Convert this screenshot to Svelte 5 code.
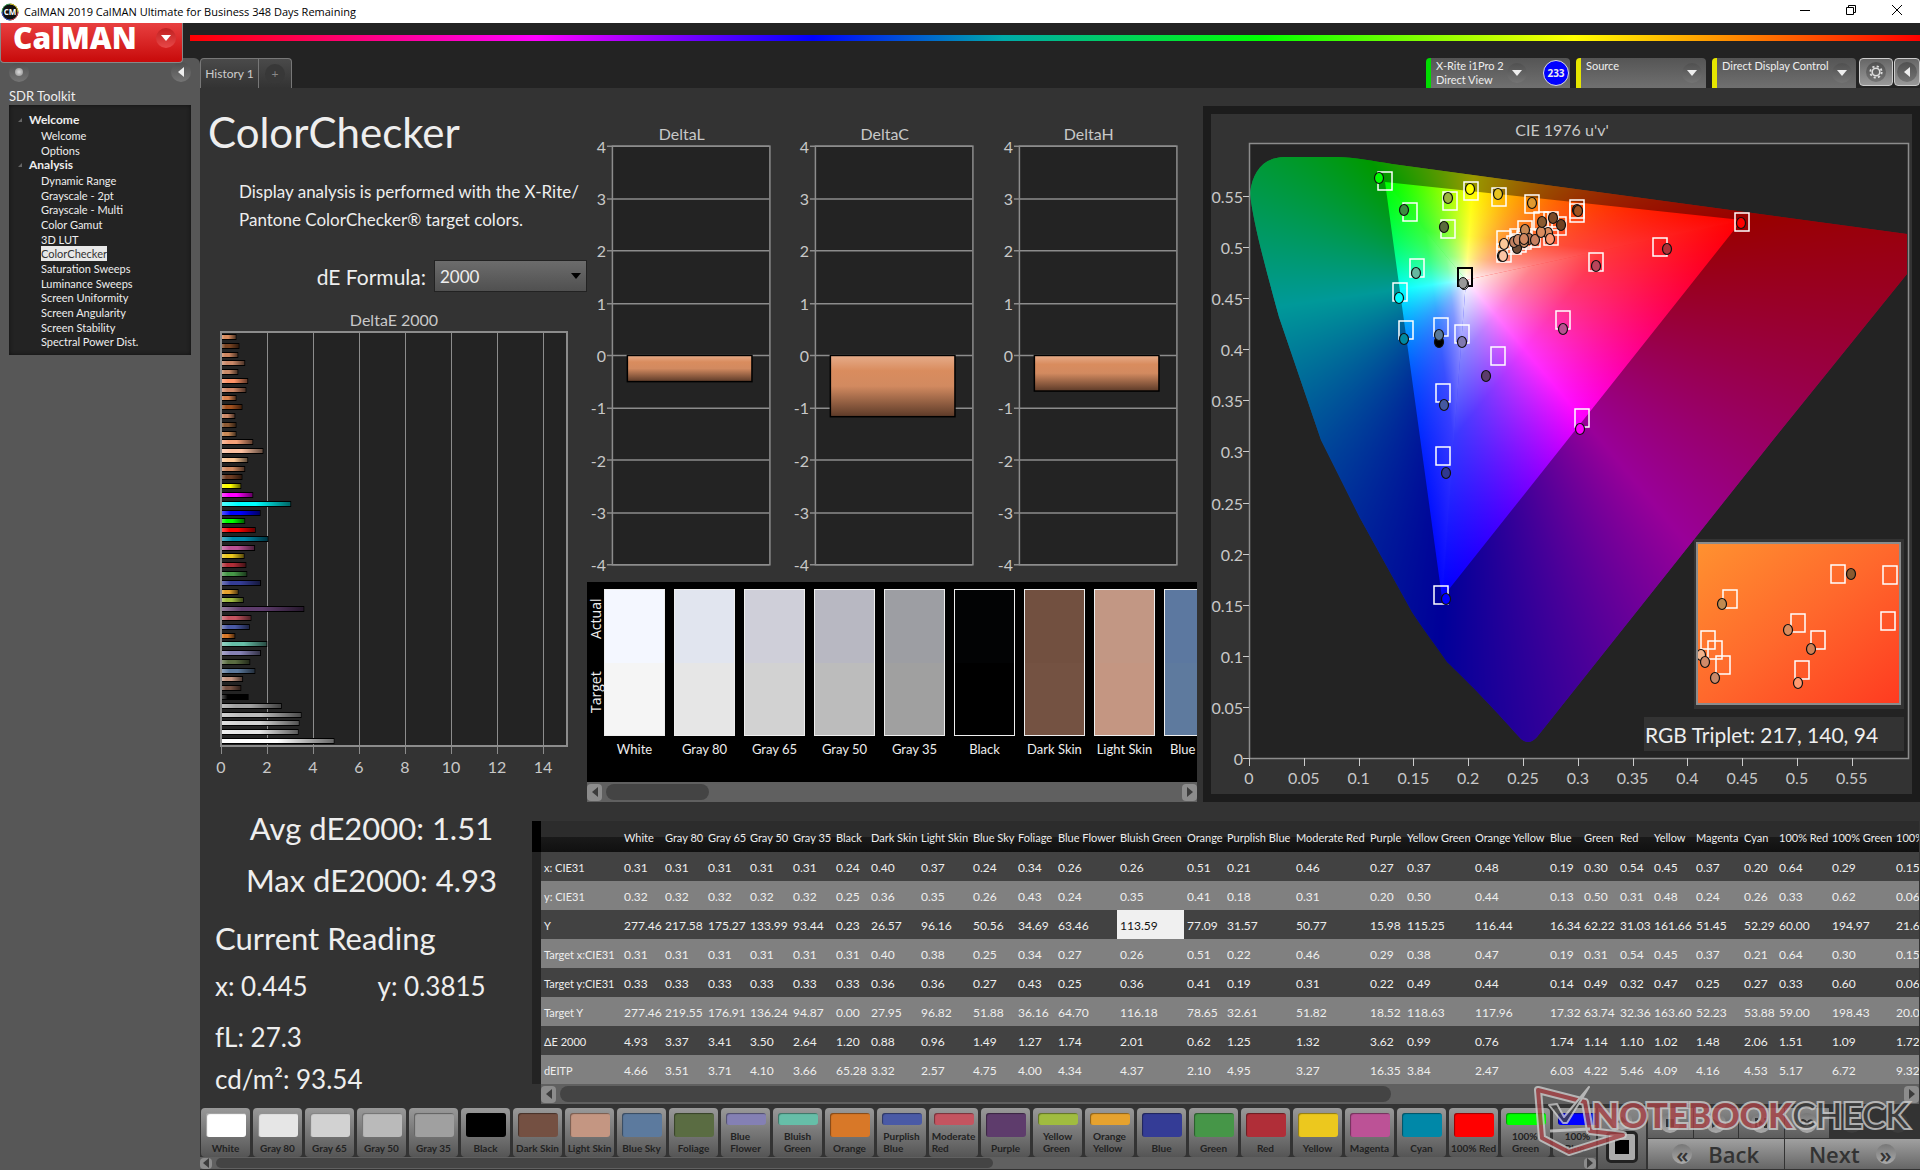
<script lang="ts">
  type Point = [number, number]

  const tree = [
    {name: 'Welcome', items: ['Welcome', 'Options']},
    {
      name: 'Analysis',
      items: [
        'Dynamic Range',
        'Grayscale - 2pt',
        'Grayscale - Multi',
        'Color Gamut',
        '3D LUT',
        'ColorChecker',
        'Saturation Sweeps',
        'Luminance Sweeps',
        'Screen Uniformity',
        'Screen Angularity',
        'Screen Stability',
        'Spectral Power Dist.'
      ]
    }
  ]
  let page = $state('ColorChecker')
  let formula = $state('2000')

  // dE value and colour of every patch, top to bottom
  const deltaE: [number, string][] = [
    [0.67, '#d98c5e'], [0.8, '#7a4422'], [0.75, '#cd8660'], [1.05, '#c98868'],
    [0.75, '#c98a68'], [1.18, '#ff9468'], [1.1, '#d08868'], [0.67, '#d9824e'],
    [0.93, '#a0501e'], [0.62, '#cd8a68'], [0.67, '#8c5a34'], [0.67, '#c98a58'],
    [1.4, '#f4a078'], [1.84, '#fcc0a0'], [1.18, '#fcc898'], [1.05, '#cd8860'],
    [0.93, '#6e3c22'], [0.88, '#ffff00'], [1.4, '#ff00ff'], [3.05, '#00ffff'],
    [1.72, '#0000ff'], [1.05, '#00ff00'], [1.51, '#ff0000'], [2.06, '#0088a8'],
    [1.48, '#bc5296'], [1.02, '#ecc81e'], [1.1, '#b02e38'], [1.14, '#469648'],
    [1.74, '#343c96'], [0.76, '#e6a22e'], [0.99, '#a0bc40'], [3.62, '#5e3c6c'],
    [1.32, '#c45460'], [1.25, '#4a5aa6'], [0.62, '#d87828'], [2.01, '#66bea8'],
    [1.74, '#8480b4'], [1.27, '#5a6c42'], [1.49, '#5c7a9e'], [0.96, '#c49682'],
    [0.88, '#745042'], [1.2, '#000000'], [2.64, '#a0a0a0'], [3.5, '#bcbcbc'],
    [3.41, '#d2d2d2'], [3.37, '#e6e6e6'], [4.93, '#ffffff']
  ]

  const deltas = [
    {name: 'DeltaL', value: -0.5},
    {name: 'DeltaC', value: -1.17},
    {name: 'DeltaH', value: -0.68}
  ]
  const levels = [4, 3, 2, 1, 0, -1, -2, -3, -4]

  const patches = [
    {name: 'White', actual: '#f4f7ff', target: '#f5f5f5'},
    {name: 'Gray 80', actual: '#e1e5ef', target: '#e6e6e6'},
    {name: 'Gray 65', actual: '#cfcfd9', target: '#d2d2d2'},
    {name: 'Gray 50', actual: '#b8b8c2', target: '#bcbcbc'},
    {name: 'Gray 35', actual: '#9d9ea3', target: '#a0a0a0'},
    {name: 'Black', actual: '#020304', target: '#000000'},
    {name: 'Dark Skin', actual: '#725040', target: '#745242'},
    {name: 'Light Skin', actual: '#c29784', target: '#c49682'},
    {name: 'Blue Sky', actual: '#5c78a0', target: '#5e7a9e'}
  ]

  // column name, width, then one value per row of the grid
  const columns: [string, number, string][] = [
    ['White', 41, '0.31 0.32 277.46 0.31 0.33 277.46 4.93 4.66'],
    ['Gray 80', 43, '0.31 0.32 217.58 0.31 0.33 219.55 3.37 3.51'],
    ['Gray 65', 42, '0.31 0.32 175.27 0.31 0.33 176.91 3.41 3.71'],
    ['Gray 50', 43, '0.31 0.32 133.99 0.31 0.33 136.24 3.50 4.10'],
    ['Gray 35', 43, '0.31 0.32 93.44 0.31 0.33 94.87 2.64 3.66'],
    ['Black', 35, '0.24 0.25 0.23 0.31 0.33 0.00 1.20 65.28'],
    ['Dark Skin', 50, '0.40 0.36 26.57 0.40 0.36 27.95 0.88 3.32'],
    ['Light Skin', 52, '0.37 0.35 96.16 0.38 0.36 96.82 0.96 2.57'],
    ['Blue Sky', 45, '0.24 0.26 50.56 0.25 0.27 51.88 1.49 4.75'],
    ['Foliage', 40, '0.34 0.43 34.69 0.34 0.43 36.16 1.27 4.00'],
    ['Blue Flower', 62, '0.26 0.24 63.46 0.27 0.25 64.70 1.74 4.34'],
    ['Bluish Green', 67, '0.26 0.35 113.59 0.26 0.36 116.18 2.01 4.37'],
    ['Orange', 40, '0.51 0.41 77.09 0.51 0.41 78.65 0.62 2.10'],
    ['Purplish Blue', 69, '0.21 0.18 31.57 0.22 0.19 32.61 1.25 4.95'],
    ['Moderate Red', 74, '0.46 0.31 50.77 0.46 0.31 51.82 1.32 3.27'],
    ['Purple', 37, '0.27 0.20 15.98 0.29 0.22 18.52 3.62 16.35'],
    ['Yellow Green', 68, '0.37 0.50 115.25 0.38 0.49 118.63 0.99 3.84'],
    ['Orange Yellow', 75, '0.48 0.44 116.44 0.47 0.44 117.96 0.76 2.47'],
    ['Blue', 34, '0.19 0.13 16.34 0.19 0.14 17.32 1.74 6.03'],
    ['Green', 36, '0.30 0.50 62.22 0.31 0.49 63.74 1.14 4.22'],
    ['Red', 34, '0.54 0.31 31.03 0.54 0.32 32.36 1.10 5.46'],
    ['Yellow', 42, '0.45 0.48 161.66 0.45 0.47 163.60 1.02 4.09'],
    ['Magenta', 48, '0.37 0.24 51.45 0.37 0.25 52.23 1.48 4.16'],
    ['Cyan', 35, '0.20 0.26 52.29 0.21 0.27 53.88 2.06 4.53'],
    ['100% Red', 53, '0.64 0.33 60.00 0.64 0.33 59.00 1.51 5.17'],
    ['100% Green', 64, '0.29 0.62 194.97 0.30 0.60 198.43 1.09 6.72'],
    ['100% Blue', 64, '0.15 0.06 21.63 0.15 0.06 20.03 1.72 9.32']
  ]
  const rows = ['x: CIE31', 'y: CIE31', 'Y', 'Target x:CIE31', 'Target y:CIE31', 'Target Y', 'ΔE 2000', 'dEITP']
  const grid = columns.map(([name, width, values]) => ({name, width, values: values.split(' ')}))
  const gridWidth = grid.reduce((sum, c) => sum + c.width, 89)

  const palette: [string, string][] = [
    ['White', '#ffffff'], ['Gray 80', '#e6e6e6'], ['Gray 65', '#d2d2d2'], ['Gray 50', '#bababa'],
    ['Gray 35', '#a0a0a0'], ['Black', '#000000'], ['Dark Skin', '#745042'], ['Light Skin', '#c49682'],
    ['Blue Sky', '#5c7a9e'], ['Foliage', '#5a6c42'], ['Blue Flower', '#8480b4'], ['Bluish Green', '#66bea8'],
    ['Orange', '#d87828'], ['Purplish Blue', '#4a5aa6'], ['Moderate Red', '#c45460'], ['Purple', '#5e3c6c'],
    ['Yellow Green', '#a0bc40'], ['Orange Yellow', '#e6a22e'], ['Blue', '#343c96'], ['Green', '#469648'],
    ['Red', '#b02e38'], ['Yellow', '#ecc81e'], ['Magenta', '#bc5296'], ['Cyan', '#0088a8'],
    ['100% Red', '#ff0000'], ['100% Green', '#00ff00'], ['100% Blue', '#0000ff']
  ]
  const isTwoLines = (name: string) => name.includes(' ') && !/Gray|Skin|Sky|100% Red/.test(name)

  // gamut chart, in units of the plot area (660 x 615)
  const locus =
    'M1 50C4 28 14 15 35 14H88C105 14 124 18 143 21L658 91V131L524 297L288 594Q280 603 272 596C240 560 215 535 198 519C185 500 174 486 163 469L111 375L72 297L30 174C18 130 4 80 1 50Z'
  const triangle = 'M136 39L493 77L193 455Z'
  const targets: Point[] = [
    [136, 38], [222, 48], [250, 54], [201, 58], [161, 69], [199, 86], [283, 61], [328, 66], [328, 70],
    [493, 79], [411, 104], [347, 119], [168, 125], [151, 149], [157, 187], [192, 184], [213, 191],
    [314, 177], [249, 213], [194, 250], [333, 275], [194, 313], [192, 452], [255, 97], [255, 110],
    [276, 87], [292, 78], [302, 78], [310, 83], [302, 93], [284, 95], [268, 95], [270, 100], [275, 97],
    [265, 102]
  ]
  const readings: [number, number, string][] = [
    [130, 35, '#00ff00'], [221, 46, '#ffff00'], [199, 55, '#9cb53c'], [155, 67, '#3c8c40'],
    [195, 84, '#5a6b3c'], [492, 80, '#ff0000'], [418, 106, '#b03038'], [167, 130, '#66b8a0'],
    [150, 155, '#00ffff'], [155, 196, '#0088a0'], [190, 199, '#000000'], [190, 192, '#5a7a9a'],
    [213, 199, '#8078b0'], [314, 186, '#b85090'], [237, 233, '#5c3c6c'], [195, 262, '#4458a0'],
    [331, 286, '#ff00ff'], [197, 330, '#303890'], [197, 456, '#0000ff'], [253, 113, '#d0a080'],
    [254, 113, '#fcc4a4'], [255, 101, '#fcc898'], [268, 105, '#6b4a35'], [265, 99, '#c08060'],
    [269, 97, '#c98a68'], [276, 87, '#c98a55'], [280, 96, '#b07050'], [275, 99, '#c88860'],
    [275, 96, '#d08860'], [286, 97, '#c98060'], [299, 90, '#d98c5e'], [292, 89, '#d98c5e'],
    [301, 96, '#ff9a70'], [293, 79, '#8a5a30'], [304, 75, '#7a4a28'], [312, 82, '#6e4022'],
    [328, 67, '#8a4a20'], [329, 68, '#a0531f'], [347, 123, '#b8455a'], [283, 60, '#e09a30'],
    [249, 51, '#e8c420']
  ]
  const zoomTargets: Point[] = [
    [142, 32], [194, 33], [34, 57], [192, 79], [102, 81], [122, 98], [12, 98], [19, 108], [27, 123], [106, 128]
  ]
  const zoomReadings: [number, number, string][] = [
    [155, 32, '#8a5a30'], [26, 62, '#c08a50'], [92, 88, '#d98c5e'], [115, 107, '#d08055'],
    [5, 113, '#f4b48c'], [9, 120, '#d08a68'], [19, 136, '#c88868'], [102, 141, '#ff9a70']
  ]
  const uTicks = [0, 0.05, 0.1, 0.15, 0.2, 0.25, 0.3, 0.35, 0.4, 0.45, 0.5, 0.55]
</script>

{#snippet arrow(dir: string)}
  <svg class="arrow {dir}" viewBox="0 0 10 10" width="10" height="10" aria-hidden="true">
    <path d="M0 2H10L5 8Z" fill="currentColor" />
  </svg>
{/snippet}

{#snippet scrollbar(size: string)}
  <div class="scrollbar {size}">
    <button aria-label="Scroll left">{@render arrow('left')}</button>
    <div class="track"><div class="thumb"></div></div>
    <button aria-label="Scroll right">{@render arrow('right')}</button>
  </div>
{/snippet}

{#snippet marks(squares: Point[], dots: [number, number, string][])}
  {#each squares as [x, y]}
    <rect x={x - 7} y={y - 9} width="14" height="18" fill="none" stroke="#fff" stroke-width="1.5" />
  {/each}
  {#each dots as [x, y, color]}
    <ellipse cx={x} cy={y} rx="4.5" ry="5.5" fill={color} stroke="#111" stroke-width="1.2" />
  {/each}
{/snippet}

<div class="app">
  <header class="titlebar">
    <svg width="18" height="18" viewBox="0 0 18 18" aria-hidden="true">
      <circle cx="9" cy="9" r="8" fill="#111" stroke="#3a9a50" />
      <path d="M9 1A8 8 0 0 1 17 9" fill="none" stroke="#d8b020" />
      <path d="M17 9A8 8 0 0 1 9 17" fill="none" stroke="#c03050" />
      <path d="M9 17A8 8 0 0 1 1 9" fill="none" stroke="#4040c0" />
      <text x="9" y="12" text-anchor="middle" font-size="8" font-weight="bold" fill="#fff">CM</text>
    </svg>
    <span>CalMAN 2019 CalMAN Ultimate for Business 348 Days Remaining</span>
    <div class="window-buttons">
      <button aria-label="Minimize"><svg width="12" height="12"><path d="M1 6.500H11" /></svg></button>
      <button aria-label="Restore">
        <svg width="12" height="12"><path d="M1.500 3.500H8.500V10.500H1.500ZM3.500 3V1.500H10.500V8.500H9" /></svg>
      </button>
      <button aria-label="Close"><svg width="12" height="12"><path d="M1 1L11 11M11 1L1 11" /></svg></button>
    </div>
  </header>

  <div class="brand">
    <button class="logo">CalMAN <span class="knob">{@render arrow('down')}</span></button>
    <div class="rainbow"></div>
  </div>

  <div class="body">
    <aside>
      <div class="side-tools">
        <span class="knob"><i></i></span>
        <button class="knob" aria-label="Collapse">{@render arrow('left')}</button>
      </div>
      <h2>SDR Toolkit</h2>
      <nav>
        {#each tree as group}
          <h3><svg width="4" height="4"><path d="M4 0V4H0Z" fill="#666" /></svg>{group.name}</h3>
          <ul>
            {#each group.items as item}
              <li>
                <button class:selected={item === page && group.name === 'Analysis'} onclick={() => (page = item)}>{item}</button>
              </li>
            {/each}
          </ul>
        {/each}
      </nav>
    </aside>

    <main>
      <div class="tabs">
        <button class="tab">History 1</button>
        <button class="tab add" aria-label="Add tab"><span class="knob">+</span></button>
        <div class="devices">
          <div class="device meter">
            <span class="name">X-Rite i1Pro 2<br />Direct View</span>
            <button class="knob" aria-label="Meter menu">{@render arrow('down')}</button>
            <span class="count">233</span>
          </div>
          <div class="device source">
            <span class="name">Source</span>
            <button class="knob" aria-label="Source menu">{@render arrow('down')}</button>
          </div>
          <div class="device display">
            <span class="name">Direct Display Control</span>
            <button class="knob" aria-label="Display menu">{@render arrow('down')}</button>
          </div>
          <button class="square" aria-label="Settings">
            <span class="knob">
              <svg width="14" height="14" viewBox="0 0 14 14" fill="none" stroke="#ddd">
                <circle cx="7" cy="7" r="3.800" stroke-width="1.600" />
                <circle cx="7" cy="7" r="5.700" stroke-width="1.800" stroke-dasharray="2.200 2.276" />
              </svg>
            </span>
          </button>
          <button class="square last" aria-label="Collapse panel"><span class="knob">{@render arrow('left')}</span></button>
        </div>
      </div>

      <div class="charts">
        <section class="intro">
          <h1>ColorChecker</h1>
          <p>Display analysis is performed with the X-Rite/<br />Pantone ColorChecker® target colors.</p>
          <div class="formula">
            <label for="formula">dE Formula:</label>
            <div class="select">
              <select id="formula" bind:value={formula}>
                <option>2000</option>
                <option>1994</option>
                <option>1976</option>
              </select>
              {@render arrow('down')}
            </div>
          </div>
          <svg class="chart" viewBox="0 0 387 476">
            <defs>
              <linearGradient id="shade">
                <stop offset="0" stop-color="#fff" stop-opacity=".35" />
                <stop offset=".25" stop-color="#fff" stop-opacity="0" />
                <stop offset=".5" stop-color="#000" stop-opacity="0" />
                <stop offset="1" stop-color="#000" stop-opacity=".6" />
              </linearGradient>
            </defs>
            <text class="caption" x="194" y="20" text-anchor="middle">DeltaE 2000</text>
            <rect x="21" y="26" width="345" height="414" fill="#232323" />
            {#each [0, 2, 4, 6, 8, 10, 12, 14] as tick}
              <path d="M{21.5 + tick * 23} 26V448" stroke="#8c8c8c" />
              <text class="axis" x={21 + tick * 23} y="467" text-anchor="middle">{tick}</text>
            {/each}
            {#each deltaE as [value, color], i}
              {@const y = Math.round(28 + i * 8.78)}
              <rect x="21" {y} width={value * 23} height="6" fill="#000" />
              <rect x="21" y={y + 1} width={value * 23 - 1} height="4" fill={color} />
              <rect x="21" y={y + 1} width={value * 23 - 1} height="4" fill="url(#shade)" />
            {/each}
            <rect x="21" y="26" width="346" height="414" fill="none" stroke="#8c8c8c" stroke-width="2" />
          </svg>
        </section>

        <section class="middle">
          <div class="deltas">
            {#each deltas as delta}
              <svg class="chart" viewBox="0 0 204 476">
                <defs>
                  <linearGradient id="fade" x2="0" y2="1">
                    <stop offset="0" stop-color="#e6ac8a" />
                    <stop offset=".25" stop-color="#d98c5e" />
                    <stop offset=".5" stop-color="#d28a60" />
                    <stop offset="1" stop-color="#5c3a28" />
                  </linearGradient>
                </defs>
                <text class="caption" x="95" y="33" text-anchor="middle">{delta.name}</text>
                <rect x="26" y="39" width="157" height="420" fill="#232323" />
                {#each levels as level}
                  {@const y = 249 - level * 52.5}
                  <path d="M20 {Math.round(y)}.5H183" stroke="#8c8c8c" stroke-width="1.500" />
                  <text class="axis" x="19" y={y + 7} text-anchor="end">{level}</text>
                {/each}
                <rect x="25.500" y="39.500" width="158" height="420" fill="none" stroke="#8c8c8c" stroke-width="1.500" />
                <rect x="40.500" y="249.500" width="125" height={-delta.value * 52.5} fill="url(#fade)" stroke="#000" stroke-width="1.500" />
              </svg>
            {/each}
          </div>
          <div class="patches">
            <div class="sides"><span>Target</span><span>Actual</span></div>
            {#each patches as patch}
              <figure>
                <div class="swatch">
                  <div style="background: {patch.actual}"></div>
                  <div style="background: {patch.target}"></div>
                </div>
                <figcaption>{patch.name}</figcaption>
              </figure>
            {/each}
          </div>
          {@render scrollbar('large')}
        </section>

        <section class="gamut">
          <svg viewBox="0 0 701 680">
            <defs>
              <clipPath id="locus"><path d={locus} /></clipPath>
              <linearGradient id="to-gr" gradientUnits="userSpaceOnUse" x1="226" y1="49" x2="217" y2="137">
                <stop offset="0" stop-color="#fff" stop-opacity="0" />
                <stop offset=".5" stop-color="#fff" stop-opacity=".22" />
                <stop offset=".75" stop-color="#fff" stop-opacity=".5" />
                <stop offset="1" stop-color="#fff" />
              </linearGradient>
              <linearGradient id="to-rb" gradientUnits="userSpaceOnUse" x1="356" y1="248" x2="217" y2="137">
                <stop offset="0" stop-color="#fff" stop-opacity="0" />
                <stop offset=".5" stop-color="#fff" stop-opacity=".22" />
                <stop offset=".75" stop-color="#fff" stop-opacity=".5" />
                <stop offset="1" stop-color="#fff" />
              </linearGradient>
              <linearGradient id="to-bg" gradientUnits="userSpaceOnUse" x1="150" y1="146" x2="217" y2="137">
                <stop offset="0" stop-color="#fff" stop-opacity="0" />
                <stop offset=".5" stop-color="#fff" stop-opacity=".22" />
                <stop offset=".75" stop-color="#fff" stop-opacity=".5" />
                <stop offset="1" stop-color="#fff" />
              </linearGradient>
              <linearGradient id="zoom" x2="1" y2="1">
                <stop offset="0" stop-color="#ff9230" />
                <stop offset=".5" stop-color="#ff682c" />
                <stop offset="1" stop-color="#ff3a20" />
              </linearGradient>
            </defs>
            <text class="caption" x="351" y="22" text-anchor="middle">CIE 1976 u'v'</text>
            <g transform="translate(38 29)">
              <rect width="660" height="615" fill="#232323" />
              <g clip-path="url(#locus)">
                <foreignObject width="660" height="615"><div class="hues"></div></foreignObject>
                <path d="M0 0H660V615H0Z{triangle}" fill="#000" fill-opacity=".4" fill-rule="evenodd" />
              </g>
              <path d="M136 39L493 77L217 137Z" fill="url(#to-gr)" />
              <path d="M493 77L193 455L217 137Z" fill="url(#to-rb)" />
              <path d="M193 455L136 39L217 137Z" fill="url(#to-bg)" />
              <rect x=".5" y=".5" width="659" height="615" fill="none" stroke="#8c8c8c" stroke-width="1.500" />
              {#each uTicks as tick}
                <path d="M{Math.round(tick * 1096)}.5 615V623M-6 {Math.round(615 - tick * 1022)}.5H0" stroke="#ccc" />
                <text class="axis" x={tick * 1096} y="641" text-anchor="middle">{tick}</text>
                <text class="axis" x="-6" y={622 - tick * 1022} text-anchor="end">{tick}</text>
              {/each}
              {@render marks(targets, readings)}
              <rect x="209" y="125" width="14" height="18" fill="none" stroke="#000" stroke-width="2" />
              <ellipse cx="215" cy="141" rx="4.500" ry="5.500" fill="#c0c0c0" stroke="#111" />
              <ellipse cx="214" cy="140" rx="4.500" ry="5.500" fill="#999" stroke="#111" />
              <rect x="445" y="396" width="210" height="170" fill="#333" />
              <rect x="395" y="574" width="260" height="34" fill="#333" />
              <text class="triplet" x="396" y="600">RGB Triplet: 217, 140, 94</text>
              <svg x="447" y="399" width="205" height="163">
                <rect width="205" height="163" fill="url(#zoom)" />
                {@render marks(zoomTargets, zoomReadings)}
                <rect x="1" y="1" width="203" height="161" fill="none" stroke="#8c8c8c" stroke-width="2" />
              </svg>
            </g>
          </svg>
        </section>
      </div>

      <div class="results">
        <section class="stats">
          <p class="big">Avg dE2000: 1.51</p>
          <p class="big">Max dE2000: 4.93</p>
          <h2>Current Reading</h2>
          <p class="pair"><span>x: 0.445</span><span>y: 0.3815</span></p>
          <p>fL: 27.3</p>
          <p>cd/m²: 93.54</p>
        </section>
        <div class="grid">
          <div class="grid-view">
            <table style="width: {gridWidth}px">
              <colgroup>
                <col style="width: 9px" />
                <col style="width: 80px" />
                {#each grid as column}<col style="width: {column.width}px" />{/each}
              </colgroup>
              <thead>
                <tr>
                  <td class="handle"></td>
                  <td></td>
                  {#each grid as column}<th scope="col">{column.name}</th>{/each}
                </tr>
              </thead>
              <tbody>
                {#each rows as row, r}
                  <tr>
                    <td class="handle"></td>
                    <th scope="row">{row}</th>
                    {#each grid as column}
                      <td class:current={row === 'Y' && column.name === 'Bluish Green'}>{column.values[r]}</td>
                    {/each}
                  </tr>
                {/each}
              </tbody>
            </table>
          </div>
          {@render scrollbar('grid-scroll')}
        </div>
      </div>

      <footer>
        <div class="palette">
          <div class="chips">
            {#each palette as [name, color]}
              <button class="chip">
                <i style="background: {color}"></i>
                <span class:wrap={isTwoLines(name)}>{name}</span>
              </button>
            {/each}
          </div>
          {@render scrollbar('small')}
        </div>
        <div class="stop">
          <button class="up" aria-label="Up"><span class="knob">{@render arrow('up')}</span></button>
          <button class="record" aria-label="Pattern window"><i></i></button>
        </div>
        <div class="controls">
          <div class="row">
            <button aria-label="Stop"><span class="knob"><svg width="10" height="10"><path d="M1 1H9V9H1Z" /></svg></span></button>
            <button aria-label="Play"><span class="knob"><svg width="10" height="10"><path d="M1 0L9 5L1 10Z" /></svg></span></button>
            <button aria-label="Series"><span class="knob"><svg width="12" height="10"><path d="M0 0H3V2H2V8H3V10H0ZM12 0H9V2H10V8H9V10H12ZM4 2L8 5L4 8Z" /></svg></span></button>
            <button aria-label="Continuous"><span class="knob"><svg width="14" height="8"><path class="loop" d="M7 4C3 -1 1 1 1 4S4 8 7 4S13 1 13 4S10 8 7 4Z" /></svg></span></button>
            <button class="off" aria-label="Refresh" disabled><span class="knob"></span></button>
            <button class="off" aria-label="More" disabled><span class="knob"></span></button>
          </div>
          <div class="row">
            <button class="step"><span class="knob">«</span>Back</button>
            <button class="step">Next<span class="knob">»</span></button>
          </div>
        </div>
        <svg class="watermark" width="390" height="74" viewBox="0 0 390 74">
          <g fill="none" stroke-linejoin="round">
            <path d="M5 5L52 17L57 46L90 50L36 67L9 53Z" stroke="#ccc" stroke-width="8" />
            <path d="M5 5L52 17L57 46L90 50L36 67L9 53Z" stroke="#a84448" stroke-width="4" />
            <path d="M17 46L57 44" stroke="#ccc" stroke-width="3" />
            <path d="M16 20L24 19L31 32L56 2L34 38H30Z" fill="#444" stroke="#ccc" stroke-width="2" />
          </g>
          <text x="59" y="43" class="notebook">NOTEBOOK<tspan class="check">CHECK</tspan></text>
        </svg>
      </footer>
    </main>
  </div>
</div>

<style>
  :global(body) {
    margin: 0;
    background: #333;
  }
  .app {
    display: flex;
    flex-direction: column;
    min-height: 100vh;
    overflow: hidden;
    color: #eee;
    background: #232323;
    font-family: Lato, sans-serif;
    font-size: 13px;
  }
  button,
  select {
    margin: 0;
    padding: 0;
    border: 0;
    color: inherit;
    background: none;
    font: inherit;
  }
  h1,
  h2,
  h3,
  p,
  ul,
  figure {
    margin: 0;
    padding: 0;
    font-weight: normal;
    list-style: none;
  }
  .arrow.left {
    transform: rotate(90deg);
  }
  .arrow.right {
    transform: rotate(-90deg);
  }
  .arrow.up {
    transform: rotate(180deg);
  }
  .knob {
    display: flex;
    align-items: center;
    justify-content: center;
    flex: none;
    width: 20px;
    height: 20px;
    border-radius: 50%;
    background: linear-gradient(#505050, #747474);
  }

  .titlebar {
    display: flex;
    align-items: center;
    gap: 5px;
    height: 23px;
    padding-left: 1px;
    color: #000;
    background: #fff;
    font-family: 'Open Sans', sans-serif;
    font-size: 11px;
  }
  .window-buttons {
    display: flex;
    margin-left: auto;
  }
  .window-buttons button {
    width: 46px;
    height: 22px;
  }
  .window-buttons path {
    fill: none;
    stroke: #000;
  }

  .brand {
    display: flex;
    align-items: flex-start;
    height: 35px;
  }
  .logo {
    z-index: 1;
    display: flex;
    align-items: center;
    justify-content: space-between;
    box-sizing: border-box;
    width: 183px;
    height: 40px;
    padding: 0 6px 10px 12px;
    border: 1px solid #888;
    border-top: 0;
    border-radius: 0 0 4px 4px;
    color: #fff;
    background: linear-gradient(#e84040, #c80a0a);
    font: 800 30px/28px 'Open Sans', sans-serif;
  }
  .logo .knob {
    background: linear-gradient(#c02020, #e84848);
  }
  .rainbow {
    flex: 1;
    height: 6px;
    margin: 12px 0 0 7px;
    background: linear-gradient(90deg, #f00, #f0f 20%, #00f 36%, #0aa 47%, #0f0 62%, #ff0 80%, #f00);
  }

  .body {
    display: flex;
    flex: 1;
  }
  aside {
    flex: 0 0 200px;
    box-sizing: border-box;
    padding: 4px 9px 0;
    border-radius: 0 6px 0 0;
    background: #575757;
  }
  .side-tools {
    display: flex;
    justify-content: space-between;
  }
  .side-tools i {
    width: 8px;
    height: 8px;
    border-radius: 50%;
    background: radial-gradient(#ddd, #888);
  }
  aside h2 {
    margin-top: 5px;
    font-size: 13px;
    line-height: 18px;
  }
  nav {
    padding: 7px 0 6px;
    background: #232323;
    font-size: 11px;
    line-height: 15px;
    box-shadow: inset 0 0 4px #111;
  }
  nav h3 {
    display: flex;
    align-items: center;
    gap: 7px;
    padding-left: 9px;
    font-size: 12px;
    font-weight: bold;
  }
  nav ul {
    padding: 1px 0 0 32px;
  }
  nav li {
    height: 15px;
  }
  nav li:nth-child(3n + 2) {
    height: 14px;
  }
  nav button.selected {
    color: #333;
    background: #e8e8e8;
  }

  main {
    display: flex;
    flex-direction: column;
    flex: 1;
    min-width: 0;
    background: #333;
  }
  .tabs {
    display: flex;
    height: 30px;
    background: #232323;
    font-size: 12px;
    line-height: 14px;
  }
  .tab {
    width: 59px;
    border: 1px solid #777;
    border-bottom: 0;
    border-radius: 4px 0 0 0;
    color: #ccc;
    background: linear-gradient(#4a4a4a, #333);
  }
  .tab.add {
    display: flex;
    align-items: center;
    justify-content: center;
    width: 33px;
    border-left: 0;
    border-radius: 0 4px 0 0;
    color: #888;
  }
  .tab .knob {
    background: #383838;
  }
  .devices {
    display: flex;
    gap: 6px;
    margin-left: auto;
  }
  .device {
    display: flex;
    box-sizing: border-box;
    width: 144px;
    padding: 1px 4px 0 5px;
    border-left: 5px solid #e6e600;
    border-radius: 4px 4px 0 0;
    background: linear-gradient(#555, #707070);
  }
  .device.meter {
    border-color: #00dc00;
    padding-right: 1px;
  }
  .device.source {
    width: 130px;
  }
  .name {
    flex: 1;
    white-space: nowrap;
    font-size: 11px;
  }
  .device .knob {
    margin-top: 4px;
  }
  .count {
    width: 24px;
    height: 24px;
    margin: 1px 0 0 16px;
    border: 1px solid #ddd;
    border-radius: 50%;
    background: #00f;
    font: bold 10px/24px 'Open Sans', sans-serif;
    text-align: center;
  }
  .square {
    display: flex;
    align-items: center;
    justify-content: center;
    width: 34px;
    height: 28px;
    margin-left: -3px;
    border: 1px solid #ccc;
    border-radius: 4px;
    background: linear-gradient(#666, #999);
  }
  .square.last {
    width: 26px;
    margin-left: -5px;
  }

  .charts {
    display: flex;
    align-items: flex-start;
  }
  .chart {
    display: block;
    width: 100%;
  }
  .caption,
  .axis {
    fill: #c8c8c8;
    font-size: 16px;
  }
  .triplet {
    fill: #eee;
    font-size: 21px;
  }
  .intro {
    flex: 0 0 387px;
    min-width: 0;
  }
  h1 {
    padding: 12px 0 0 8px;
    font-size: 42px;
    line-height: 64px;
  }
  .intro p {
    padding: 14px 0 0 39px;
    white-space: nowrap;
    font-size: 17px;
    line-height: 28px;
  }
  .formula {
    display: flex;
    align-items: center;
    justify-content: flex-end;
    gap: 8px;
    height: 32px;
    margin: 26px 0 14px;
    font-size: 21px;
  }
  .select {
    display: flex;
    align-items: center;
    width: 153px;
    height: 32px;
    box-sizing: border-box;
    border: 1px solid #222;
    background: linear-gradient(#6c6c6c, #505050);
  }
  .select .arrow {
    margin: 0 5px 0 -15px;
    color: #000;
    pointer-events: none;
  }
  select {
    appearance: none;
    flex: 1;
    height: 30px;
    padding-left: 5px;
    font-size: 17px;
  }

  .middle {
    box-sizing: border-box;
    flex: 0 0 612px;
    min-width: 0;
    padding: 18px 2px 0 0;
  }
  .deltas {
    display: flex;
  }
  .deltas .chart {
    flex: 1;
    min-width: 0;
    height: 476px;
  }
  .patches {
    display: flex;
    gap: 9px;
    height: 200px;
    overflow: hidden;
    background: #000;
    font-size: 13px;
  }
  .sides {
    display: flex;
    justify-content: space-around;
    flex: none;
    width: 17px;
    height: 147px;
    margin-right: -9px;
    padding-top: 7px;
    writing-mode: vertical-rl;
    transform: rotate(180deg);
    font: 14px/17px 'Open Sans', sans-serif;
  }
  figure {
    flex: 0 0 61px;
    padding-top: 7px;
    text-align: center;
    white-space: nowrap;
  }
  .swatch {
    display: flex;
    flex-direction: column;
    height: 145px;
    border: 1px solid #eee;
  }
  .swatch div {
    flex: 1;
  }
  figcaption {
    padding-top: 4px;
    line-height: 18px;
  }

  .scrollbar {
    display: flex;
    align-items: center;
    gap: 4px;
    height: 20px;
    background: #606060;
  }
  .scrollbar button {
    display: flex;
    align-items: center;
    justify-content: center;
    width: 15px;
    height: 17px;
    border-radius: 4px;
    color: #3c3c3c;
    background: #8c8c8c;
  }
  .track {
    flex: 1;
    height: 16px;
  }
  .thumb {
    width: 18%;
    height: 100%;
    border-radius: 8px;
    background: #444;
  }
  .grid-scroll .thumb {
    width: 62%;
  }
  .small .thumb {
    width: 57%;
  }
  .scrollbar.small {
    height: 12px;
  }
  .small button {
    width: 12px;
    height: 11px;
  }
  .small .track {
    height: 10px;
  }

  .gamut {
    flex: 1;
    min-width: 0;
    margin: 18px 0 0 4px;
    padding: 8px;
    background: #1c1c1c;
  }
  .gamut > svg {
    display: block;
    background: #333;
  }
  .hues {
    height: 615px;
    background: conic-gradient(
      from 4deg at 217px 137px,
      #ff0,
      #f00 74deg,
      #f0f 136deg,
      #00f 180deg,
      #0ff 258deg,
      #0f0 317deg,
      #ff0
    );
  }

  .results {
    display: flex;
    margin-top: 19px;
  }
  .stats {
    flex: 0 0 332px;
    box-sizing: border-box;
    height: 283px;
    margin-top: -14px;
    padding-left: 15px;
    white-space: nowrap;
    font-size: 26px;
  }
  .stats p {
    line-height: 42px;
  }
  .stats .big {
    padding: 0 0 10px 24px;
    font-size: 31px;
    width: 265px;
    text-align: center;
  }
  .stats h2 {
    padding: 6px 0;
    font-size: 31px;
    line-height: 42px;
  }
  .stats .pair {
    display: flex;
    gap: 70px;
    padding-bottom: 9px;
  }
  .grid {
    flex: 1;
    min-width: 0;
    padding-right: 1px;
  }
  .grid-view {
    overflow: hidden;
  }
  .grid-scroll {
    margin-left: 9px;
  }
  table {
    table-layout: fixed;
    border-spacing: 0;
    font-size: 12px;
  }
  table th,
  table td {
    height: 29px;
    padding: 1px 0 0 3px;
    box-sizing: border-box;
    font-weight: normal;
    text-align: left;
    white-space: nowrap;
  }
  table th {
    font-size: 11px;
  }
  thead th,
  thead td {
    height: 31px;
    background: linear-gradient(#2c2c2c 50%, #1a1a1a 50%, #101010);
  }
  tbody tr {
    background: #424242;
  }
  tbody tr:nth-child(even) {
    background: #808080;
  }
  .handle {
    background: #232323;
  }
  thead .handle {
    background: #000;
  }
  .current {
    color: #111;
    background: #f0f0f0;
  }

  footer {
    position: relative;
    display: flex;
    gap: 2px;
    margin-top: 4px;
  }
  .palette {
    flex: 1;
    min-width: 0;
  }
  .chips {
    display: flex;
    gap: 3px;
    padding-left: 1px;
    overflow: hidden;
  }
  .chip {
    display: flex;
    flex-direction: column;
    align-items: center;
    box-sizing: border-box;
    flex: 0 0 49px;
    height: 49px;
    padding-top: 5px;
    border-radius: 4px;
    color: #222;
    background: linear-gradient(#999, #555);
    font-size: 10px;
    font-weight: bold;
    line-height: 12px;
  }
  .chip i {
    flex: 1;
    width: 40px;
    border-radius: 3px;
    box-shadow: inset 1px 1px 1px rgba(0, 0, 0, 0.4);
  }
  .chip span {
    padding: 5px 0 3px;
    white-space: nowrap;
  }
  .chip span.wrap {
    width: min-content;
    white-space: normal;
    text-align: left;
  }
  .stop {
    display: flex;
    flex-direction: column;
    align-items: center;
    width: 48px;
    background: linear-gradient(#888, #555);
  }
  .up {
    height: 23px;
    color: #444;
  }
  .stop .knob,
  .controls .knob {
    background: linear-gradient(#777, #aaa);
  }
  .record {
    display: flex;
    align-items: center;
    justify-content: center;
    width: 32px;
    height: 32px;
    border: 3px solid #222;
    border-radius: 5px;
    background: #aaa;
  }
  .record i {
    width: 14px;
    height: 14px;
    background: #000;
  }
  .controls {
    display: flex;
    flex-direction: column;
    gap: 1px;
    flex: 0 0 272px;
  }
  .row {
    display: flex;
    gap: 1px;
    height: 30px;
  }
  .row button {
    display: flex;
    align-items: center;
    justify-content: center;
    flex: 1;
    color: #333;
    background: linear-gradient(#888, #5c5c5c);
  }
  .row button.off {
    background: #333;
  }
  .row .off .knob {
    background: #3c3c3c;
  }
  .row path {
    fill: #333;
  }
  .row .loop {
    fill: none;
    stroke: #333;
    stroke-width: 2px;
  }
  .row .step {
    gap: 16px;
    background: linear-gradient(#a0a0a0, #666);
    font: 600 22px/30px 'Open Sans', sans-serif;
  }
  .watermark {
    position: absolute;
    right: -3px;
    bottom: 10px;
    opacity: 0.8;
    pointer-events: none;
  }
  .notebook {
    fill: #a84448;
    stroke: #ccc;
    stroke-width: 4px;
    paint-order: stroke;
    font-size: 35px;
    font-weight: 900;
  }
  .check {
    fill: #3c3c3c;
    font-weight: 500;
  }
</style>
